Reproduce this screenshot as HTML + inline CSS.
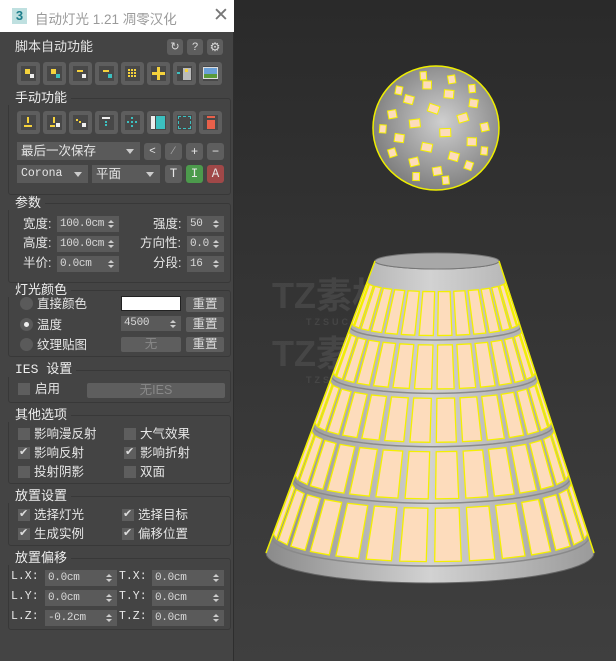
<!DOCTYPE html>
<html><head><meta charset="utf-8">
<style>
*{box-sizing:border-box;margin:0;padding:0}
body{width:616px;height:661px;overflow:hidden;background:#303030;font-family:"Liberation Sans","Noto Sans CJK SC",sans-serif;font-size:12.5px;color:#e6e6e6;position:relative}
#vp{position:absolute;left:0;top:0;width:616px;height:661px;background:linear-gradient(#2a2a2a,#333 40%,#3f3f3f)}
#panel{position:absolute;left:0;top:0;width:234px;height:661px;background:#444;border-right:1px solid #2e2e2e}
#title{position:absolute;left:0;top:0;width:234px;height:32px;background:#fff}
.a{position:absolute;white-space:nowrap}
.btn{position:absolute;background:#5e5e5e;border-radius:3px}
.ib{position:absolute;width:23px;height:23px;background:#5e5e5e;border-radius:3px}
.ib i{position:absolute;left:4px;top:4px;width:15px;height:15px;background:#484848}
.ib b{position:absolute;display:block}
.grp{position:absolute;left:8px;width:223px;border:1px solid #383838;border-radius:3px}
.gl{position:absolute;background:#444;padding:0 4px 0 7px;font-size:13px;color:#eee;line-height:14px}
.sp{position:absolute;height:16px;background:#5a5a5a;font-family:"Liberation Mono",monospace;font-size:11px;color:#d8d8d8;line-height:16px;padding-left:3px;letter-spacing:-0.3px}
.sp:after{content:"";position:absolute;right:5px;top:1px;border:3px solid transparent;border-bottom:3px solid #ccc;}
.sp:before{content:"";position:absolute;right:5px;top:9px;border:3px solid transparent;border-top:3px solid #ccc;}
.cb{position:absolute;width:12px;height:12px;background:#5e5e5e}
.cb.k:after{content:"✔";position:absolute;left:1px;top:-2px;font-size:11px;color:#ddd}
.rd{position:absolute;width:13px;height:13px;border-radius:50%;background:#5a5a5a}
.rb{position:absolute;height:15px;background:#5e5e5e;border-radius:2px;text-align:center;line-height:15px;font-size:12.5px;color:#ddd}
.lb{position:absolute;font-size:12.5px;color:#e6e6e6;line-height:14px}
.dd{position:absolute;height:18px;background:#5a5a5a;line-height:18px;padding-left:4px;font-size:12.5px}
.dd:after{content:"";position:absolute;right:6px;top:7px;border:4px solid transparent;border-top:5px solid #ccc}
.mono{font-family:"Liberation Mono",monospace}
</style></head><body>
<div id="vp">
<svg id="scene" width="616" height="661" style="position:absolute;left:0;top:0">
<defs>
<linearGradient id="cg" x1="0" x2="1"><stop offset="0" stop-color="#8a8a8a"/><stop offset=".5" stop-color="#d2d2d2"/><stop offset="1" stop-color="#9a9a9a"/></linearGradient>
<radialGradient id="sg" cx=".55" cy=".45" r=".6"><stop offset="0" stop-color="#cfcfcf"/><stop offset="1" stop-color="#7a7a7a"/></radialGradient>
</defs>
<g id="wm" font-family="Liberation Sans,Noto Sans CJK SC,sans-serif" font-weight="bold" fill="#5a5a5a" opacity=".45">
<text x="272" y="308" font-size="36">TZ素材网</text><text x="306" y="325" font-size="9" letter-spacing="3">TZSUCAI.COM</text>
<text x="272" y="366" font-size="36">TZ素材网</text><text x="306" y="383" font-size="9" letter-spacing="3">TZSUCAI.COM</text>
</g>
<g id="cone"></g>
<g id="sph"></g>
</svg>
</div>
<div id="panel">
<div id="title">
<div class="a" style="left:12px;top:8px;width:15px;height:16px;background:#bfe0e0;color:#1b7d8a;font-weight:bold;font-size:13px;text-align:center;line-height:16px">3</div>
<div class="a" style="left:35px;top:8px;color:#9a9a9a;font-size:13.5px">自动灯光 1.21 凋零汉化</div>
<div class="a" style="left:213px;top:4px;color:#777;font-size:19px">✕</div>
</div>
<div class="lb" style="left:15px;top:40px;font-size:13px">脚本自动功能</div>
<div class="btn" style="left:167px;top:39px;width:16px;height:16px;color:#ddd;font-size:11px;text-align:center;line-height:16px">↻</div>
<div class="btn" style="left:187px;top:39px;width:16px;height:16px;color:#ddd;font-size:11px;text-align:center;line-height:16px">?</div>
<div class="btn" style="left:207px;top:39px;width:16px;height:16px;color:#ddd;font-size:12px;text-align:center;line-height:16px">⚙</div>
<div id="row1"></div>
<div class="grp" style="top:98px;height:97px"></div><div class="gl" style="left:8px;top:91px">手动功能</div>
<div id="row2"></div>
<div class="dd" style="left:17px;top:142px;width:123px">最后一次保存</div>
<div class="btn" style="left:144px;top:143px;width:17px;height:17px;text-align:center;line-height:16px;font-size:11px">&lt;</div>
<div class="btn" style="left:165px;top:143px;width:17px;height:17px;text-align:center;line-height:16px;font-size:11px;color:#aaa">⁄</div>
<div class="btn" style="left:186px;top:143px;width:17px;height:17px;text-align:center;line-height:16px;font-size:12px">+</div>
<div class="btn" style="left:207px;top:143px;width:17px;height:17px;text-align:center;line-height:16px;font-size:12px">−</div>
<div class="dd mono" style="left:17px;top:165px;width:71px;font-size:11.5px">Corona</div>
<div class="dd" style="left:92px;top:165px;width:68px">平面</div>
<div class="btn mono" style="left:165px;top:165px;width:17px;height:18px;text-align:center;line-height:18px">T</div>
<div class="btn mono" style="left:186px;top:165px;width:17px;height:18px;text-align:center;line-height:18px;background:#4c9a4c">I</div>
<div class="btn mono" style="left:207px;top:165px;width:17px;height:18px;text-align:center;line-height:18px;background:#a04848">A</div>

<div class="grp" style="top:203px;height:80px"></div><div class="gl" style="left:8px;top:196px">参数</div>
<div class="lb" style="left:23px;top:217px">宽度:</div><div class="sp" style="left:57px;top:216px;width:62px">100.0cm</div>
<div class="lb" style="left:23px;top:236px">高度:</div><div class="sp" style="left:57px;top:236px;width:62px">100.0cm</div>
<div class="lb" style="left:23px;top:256px">半价:</div><div class="sp" style="left:57px;top:256px;width:62px">0.0cm</div>
<div class="lb" style="left:153px;top:217px">强度:</div><div class="sp" style="left:187px;top:216px;width:37px">50</div>
<div class="lb" style="left:140px;top:236px">方向性:</div><div class="sp" style="left:187px;top:236px;width:37px">0.0</div>
<div class="lb" style="left:153px;top:256px">分段:</div><div class="sp" style="left:187px;top:256px;width:37px">16</div>

<div class="grp" style="top:290px;height:67px"></div><div class="gl" style="left:8px;top:283px">灯光颜色</div>
<div class="rd" style="left:20px;top:297px"></div><div class="lb" style="left:37px;top:297px">直接颜色</div>
<div class="rd" style="left:20px;top:318px"></div><div class="a" style="left:24px;top:322px;width:5px;height:5px;border-radius:50%;background:#eee"></div><div class="lb" style="left:37px;top:318px">温度</div>
<div class="rd" style="left:20px;top:338px"></div><div class="lb" style="left:37px;top:338px">纹理贴图</div>
<div class="a" style="left:121px;top:296px;width:60px;height:15px;background:#fff;border:1px solid #222"></div>
<div class="sp" style="left:121px;top:316px;width:60px;height:15px;line-height:15px">4500</div>
<div class="rb" style="left:121px;top:337px;width:60px;color:#888">无</div>
<div class="rb" style="left:186px;top:297px;width:38px">重置</div>
<div class="rb" style="left:186px;top:317px;width:38px">重置</div>
<div class="rb" style="left:186px;top:337px;width:38px">重置</div>

<div class="grp" style="top:370px;height:33px"></div><div class="gl mono" style="left:8px;top:363px">IES 设置</div>
<div class="cb" style="left:18px;top:383px"></div><div class="lb" style="left:35px;top:382px">启用</div>
<div class="rb" style="left:87px;top:383px;width:138px;color:#888">无IES</div>

<div class="grp" style="top:415px;height:69px"></div><div class="gl" style="left:8px;top:408px">其他选项</div>
<div class="cb" style="left:18px;top:428px"></div><div class="lb" style="left:34px;top:427px">影响漫反射</div>
<div class="cb" style="left:124px;top:428px"></div><div class="lb" style="left:140px;top:427px">大气效果</div>
<div class="cb k" style="left:18px;top:447px"></div><div class="lb" style="left:34px;top:446px">影响反射</div>
<div class="cb k" style="left:124px;top:447px"></div><div class="lb" style="left:140px;top:446px">影响折射</div>
<div class="cb" style="left:18px;top:466px"></div><div class="lb" style="left:34px;top:465px">投射阴影</div>
<div class="cb" style="left:124px;top:466px"></div><div class="lb" style="left:140px;top:465px">双面</div>

<div class="grp" style="top:496px;height:50px"></div><div class="gl" style="left:8px;top:489px">放置设置</div>
<div class="cb k" style="left:18px;top:509px"></div><div class="lb" style="left:34px;top:508px">选择灯光</div>
<div class="cb k" style="left:122px;top:509px"></div><div class="lb" style="left:138px;top:508px">选择目标</div>
<div class="cb k" style="left:18px;top:528px"></div><div class="lb" style="left:34px;top:527px">生成实例</div>
<div class="cb k" style="left:122px;top:528px"></div><div class="lb" style="left:138px;top:527px">偏移位置</div>

<div class="grp" style="top:558px;height:72px"></div><div class="gl" style="left:8px;top:551px">放置偏移</div>
<div class="lb mono" style="left:11px;top:570px;font-size:11.5px">L.X:</div><div class="sp" style="left:45px;top:570px;width:72px">0.0cm</div>
<div class="lb mono" style="left:11px;top:590px;font-size:11.5px">L.Y:</div><div class="sp" style="left:45px;top:590px;width:72px">0.0cm</div>
<div class="lb mono" style="left:11px;top:610px;font-size:11.5px">L.Z:</div><div class="sp" style="left:45px;top:610px;width:72px">-0.2cm</div>
<div class="lb mono" style="left:119px;top:570px;font-size:11.5px">T.X:</div><div class="sp" style="left:152px;top:570px;width:72px">0.0cm</div>
<div class="lb mono" style="left:119px;top:590px;font-size:11.5px">T.Y:</div><div class="sp" style="left:152px;top:590px;width:72px">0.0cm</div>
<div class="lb mono" style="left:119px;top:610px;font-size:11.5px">T.Z:</div><div class="sp" style="left:152px;top:610px;width:72px">0.0cm</div>
</div>
<script>
var Y="#f5d23c",W="#eee",C="#3cc0c0",R="#e8604a";
function icons(top,defs){var h="";defs.forEach(function(d,i){var x=17+i*26;h+='<div class="ib" style="left:'+x+'px;top:'+top+'px"><i></i>';d.forEach(function(r){h+='<b style="left:'+r[0]+'px;top:'+r[1]+'px;width:'+r[2]+'px;height:'+r[3]+'px;background:'+r[4]+'"></b>'});h+='</div>'});return h;}
document.getElementById('row1').innerHTML=icons(62,[
[[8,7,5,5,Y],[11,10,2,2,Y],[13,12,4,4,W]],
[[8,7,5,5,Y],[13,12,4,4,C]],
[[8,8,6,2,Y],[13,12,4,4,W]],
[[8,8,6,2,Y],[13,12,4,4,C]],
[[7,7,2,2,Y],[10,7,2,2,Y],[13,7,2,2,Y],[7,10,2,2,Y],[10,10,2,2,Y],[13,10,2,2,Y],[7,13,2,2,Y],[10,13,2,2,Y],[13,13,2,2,Y]],
[[10,5,3,13,Y],[5,10,13,3,Y]],
[[4,10,3,2,C],[10,6,8,12,"#bbb"],[12,7,3,3,Y]],
[[4,5,15,12,"#ddd"],[5,6,13,6,"#6aa0d8"],[5,12,13,4,"#5a9a3a"]]
]);
document.getElementById('row2').innerHTML=icons(111,[
[[10,6,2,6,Y],[7,14,8,2,Y]],
[[10,6,2,6,Y],[7,14,5,2,Y],[13,12,4,4,W]],
[[7,8,2,2,Y],[10,10,2,2,Y],[13,12,4,4,W]],
[[7,6,8,2,W],[10,10,2,2,C],[10,13,2,2,C]],
[[10,6,2,2,C],[6,10,2,2,C],[10,10,2,2,C],[14,10,2,2,C],[10,14,2,2,C]],
[[4,5,4,13,W],[9,5,9,13,C]],
[[5,5,13,13,"transparent"]],
[[8,5,8,2,R],[8,9,8,9,R]]
]);
var d=document.querySelectorAll('#row2 .ib')[6];d.lastChild.style.border="1px dashed "+C;
var g=document.getElementById('cone'),s="";
var T={cx:437,cy:261,rx:62,ry:8},B={cx:430,cy:553,rx:164,ry:30};
function P(t,a){var cx=T.cx+(B.cx-T.cx)*t,cy=T.cy+(B.cy-T.cy)*t,rx=T.rx+(B.rx-T.rx)*t,ry=T.ry+(B.ry-T.ry)*t;return [cx+rx*Math.sin(a),cy+ry*Math.cos(a)];}
var pts=[];for(var a=-90;a<=90;a+=5)pts.push(P(0,a*Math.PI/180));for(var a=90;a>=-90;a-=5)pts.push(P(1,a*Math.PI/180));
s+='<polygon points="'+pts.map(function(p){return p.join(',')}).join(' ')+'" fill="url(#cg)" stroke="#666"/>';
s+='<ellipse cx="437" cy="261" rx="62" ry="8" fill="#a8a8a8" stroke="#777"/>';
var bands=[0.06,0.23,0.40,0.57,0.75,0.95],N=28;
for(var b=0;b<5;b++){var t0=bands[b]+0.012,t1=bands[b+1]-0.018;
 for(var k=-7;k<7;k++){var a0=k*2*Math.PI/N,a1=(k+1)*2*Math.PI/N;var m=(a0+a1)/2;if(Math.cos(m)<0.05)continue;
  var w=(a1-a0)*0.12;var q=[P(t0,a0+w),P(t0,a1-w),P(t1,a1-w),P(t1,a0+w)];
  s+='<polygon points="'+q.map(function(p){return p.join(',')}).join(' ')+'" fill="#fddcbc" stroke="#f4f000" stroke-width="1.3"/>';}
 var l=[];for(var a=-90;a<=90;a+=6)l.push(P(bands[b+1]-0.004,a*Math.PI/180));
 s+='<polyline points="'+l.map(function(p){return p.join(',')}).join(' ')+'" fill="none" stroke="#8a8a8a" stroke-width="1.5"/>';}
s+='<polyline points="'+[P(0,-1.57),P(1,-1.57)].join(' ')+'" stroke="#ee0" stroke-width="1.5" fill="none"/>';
s+='<polyline points="'+[P(0,1.57),P(1,1.57)].join(' ')+'" stroke="#ee0" stroke-width="1.5" fill="none"/>';
g.innerHTML=s;
var sp=document.getElementById('sph'),h='<ellipse cx="436" cy="128" rx="63" ry="62" fill="url(#sg)" stroke="#ee0" stroke-width="1.5"/>';
var n=60;for(var i=0;i<n;i++){var yy=1-2*(i+0.5)/n,r=Math.sqrt(1-yy*yy),th=i*2.39996;var x=r*Math.cos(th),z=r*Math.sin(th);if(z<0.2)continue;
 var px=436+x*55,py=128-yy*55,sc=0.45+0.55*z;
 h+='<rect x="'+(px-5.5*sc)+'" y="'+(py-4)+'" width="'+(11*sc)+'" height="8" fill="#fddcbc" stroke="#f4f000" stroke-width="1" transform="rotate('+(th*57%40-20)+' '+px+' '+py+')"/>';}
sp.innerHTML=h;
</script>
</body></html>
